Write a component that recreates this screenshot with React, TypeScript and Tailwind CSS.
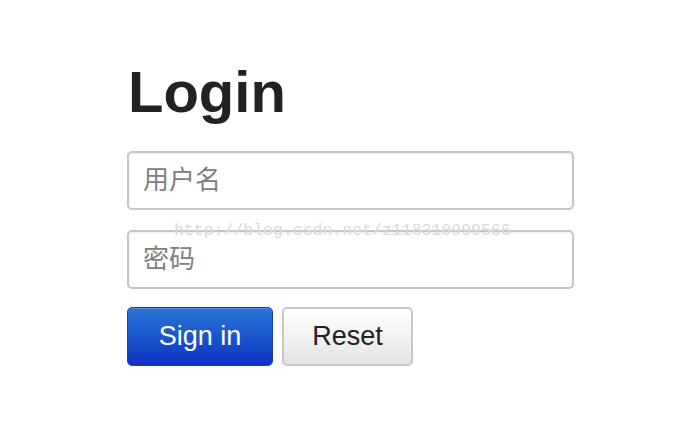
export default function App() {
  return (
    <div className="relative min-h-[438px] w-[673px] bg-white font-['Liberation_Sans',Arial,sans-serif]">
      <div className="flex flex-col pl-[128px] pt-[62px]">
        <h1 className="text-[58px] leading-[59px] font-bold text-[#222]">Login</h1>
        <form className="mt-[30px] flex flex-col">
          <Field placeholder="用户名" />
          <div className="h-[20px]" />
          <Field placeholder="密码" type="password" />
          <div className="mt-[18px] flex gap-[9px]">
            <button
              type="button"
              className="-ml-px h-[59px] w-[146px] rounded-[5px] border border-[#1b3bb0] bg-gradient-to-b from-[#2d74d6] to-[#1230c4] text-[27px] text-white shadow-[inset_0_1px_0_rgba(255,255,255,0.2)]"
            >
              Sign in
            </button>
            <button
              type="button"
              className="h-[59px] w-[131px] rounded-[5px] border-2 border-[#c8c8c8] bg-gradient-to-b from-white to-[#e4e4e4] text-[27px] text-[#222]"
            >
              Reset
            </button>
          </div>
        </form>
      </div>
      <div className="pointer-events-none absolute left-[174px] top-[221px] font-['Liberation_Mono',monospace] text-[16.5px] leading-[20px] text-[#dadada]">
        http://blog.csdn.net/z118310999566
      </div>
    </div>
  )
}

function Field(props: { placeholder: string; type?: string }) {
  return (
    <input
      type={props.type ?? "text"}
      placeholder={props.placeholder}
      className="-ml-px h-[59px] w-[447px] rounded-[5px] border-2 border-[#c6c6c6] px-[14px] font-['Liberation_Sans','Noto_Sans_CJK_SC',sans-serif] text-[26px] text-[#555] shadow-[inset_0_1px_2px_rgba(0,0,0,0.08)] outline-none placeholder:text-[#808080]"
    />
  )
}
